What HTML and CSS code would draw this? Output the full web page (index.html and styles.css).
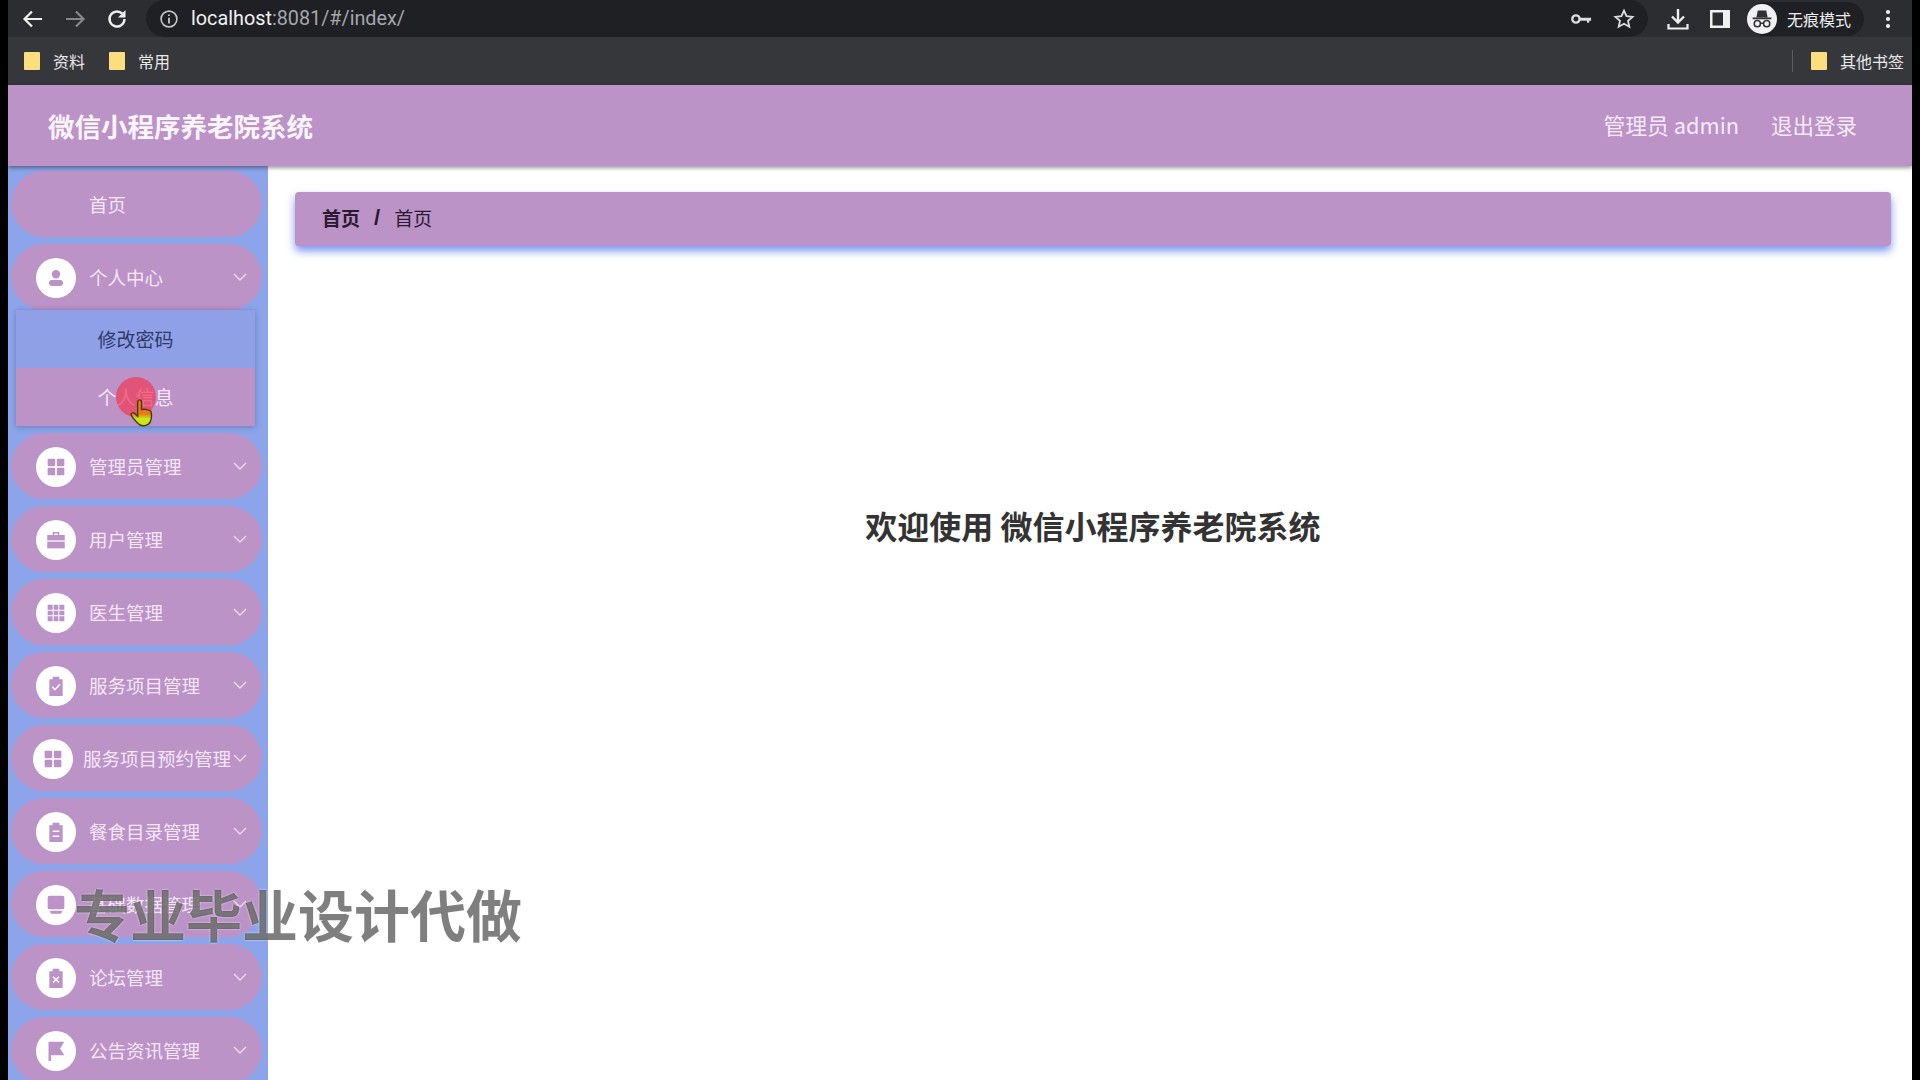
FILE: index.html
```html
<!DOCTYPE html>
<html lang="zh-CN">
<head>
    <meta charset="UTF-8">
    <title>微信小程序养老院系统</title>
    <link rel="stylesheet" href="styles.css">
</head>
<body>
    <svg class="sprite" width="0" height="0">
        <symbol id="i-user" viewBox="0 0 24 24"><circle cx="12" cy="7.500" r="5"/><rect x="3.500" y="14.500" width="17" height="7" rx="3.500"/></symbol>
        <symbol id="i-four" viewBox="0 0 24 24"><rect x="2" y="2" width="9" height="9" rx="1"/><rect x="13" y="2" width="9" height="9" rx="1"/><rect x="2" y="13" width="9" height="9" rx="1"/><rect x="13" y="13" width="9" height="9" rx="1"/></symbol>
        <symbol id="i-case" viewBox="0 0 24 24"><path d="M8 6V2.500h8V6h-1.800V4.200H9.800V6z"/><path d="M1.500 6h21v6.500h-21z"/><path d="M1.500 14h21v8h-21z"/></symbol>
        <symbol id="i-nine" viewBox="0 0 24 24"><path d="M2 2h6v6H2zM9.200 2h5.600v6H9.200zM16 2h6v6h-6zM2 9.200h6v5.600H2zM9.200 9.200h5.600v5.600H9.200zM16 9.200h6v5.600h-6zM2 16h6v6H2zM9.200 16h5.600v6H9.200zM16 16h6v6h-6z"/></symbol>
        <symbol id="i-check" viewBox="0 0 24 24"><path d="M8 1h8v3h4v20H4V4h4z"/><path d="M7.500 13l3.200 3.400 6-6.400" class="cut"/></symbol>
        <symbol id="i-list" viewBox="0 0 24 24"><path d="M8 1h8v3h4v20H4V4h4z"/><path d="M8 11h8M8 17h8" class="cut"/></symbol>
        <symbol id="i-tray" viewBox="0 0 24 24"><rect x="2" y="1" width="20" height="16" rx="2"/><path d="M5 19h14v1.500a2 2 0 0 1-2 2H7a2 2 0 0 1-2-2z"/></symbol>
        <symbol id="i-cross" viewBox="0 0 24 24"><path d="M8 1h8v3h4v20H4V4h4z"/><path d="M8.500 10.500l7 7M15.500 10.500l-7 7" class="cut"/></symbol>
        <symbol id="i-flag" viewBox="0 0 24 24"><path d="M3 1h19l-5 8 5 8H6v7H3z"/></symbol>
        <symbol id="i-chevron" viewBox="0 0 14 8"><path d="M1 1l6 6 6-6" fill="none" stroke="currentColor" stroke-width="1.400"/></symbol>
    </svg>

    <div class="screen">
        <div class="toolbar">
            <svg class="tool-icon" viewBox="0 0 24 24"><path d="M21 12H4M11 4.500L3.500 12l7.500 7.500" fill="none" stroke="#f0f0f0" stroke-width="2.200"/></svg>
            <svg class="tool-icon" viewBox="0 0 24 24"><path d="M3 12h17M13 4.500l7.500 7.500-7.500 7.500" fill="none" stroke="#85868a" stroke-width="2.200"/></svg>
            <svg class="tool-icon" viewBox="0 0 24 24"><path d="M19.500 12a7.500 7.500 0 1 1-2.200-5.300" fill="none" stroke="#f0f0f0" stroke-width="2.400"/><path d="M20.500 3v7.500H13z" fill="#f0f0f0"/></svg>
            <div class="address">
                <svg class="info-icon" viewBox="0 0 24 24"><circle cx="12" cy="12" r="9.500" fill="none" stroke="#c4c5c8" stroke-width="2"/><path d="M12 10.500v7M12 6.500v2" stroke="#c4c5c8" stroke-width="2.200"/></svg>
                <span class="url">localhost<span class="url-rest">:8081/#/index/</span></span>
                <svg class="key-icon" viewBox="0 0 24 24"><circle cx="6.500" cy="12" r="4" fill="none" stroke="#dcdcdc" stroke-width="2.600"/><path d="M10 10.500h13V14h-2v2h-2.500v-2H10z" fill="#dcdcdc"/></svg>
                <svg class="star-icon" viewBox="0 0 24 24"><path d="M12 3l2.800 6 6.500.7-4.900 4.300 1.400 6.500L12 17.200 6.200 20.500l1.400-6.500L2.700 9.700 9.200 9z" fill="none" stroke="#dcdcdc" stroke-width="2"/></svg>
            </div>
            <svg class="tool-icon tool-download" viewBox="0 0 24 24"><path d="M12 2v13M6 9.500l6 6 6-6" fill="none" stroke="#f0f0f0" stroke-width="2.400"/><path d="M2.500 17v4.500h19V17" fill="none" stroke="#f0f0f0" stroke-width="2.200"/></svg>
            <svg class="tool-icon tool-panel" viewBox="0 0 24 24"><rect x="2" y="3" width="20" height="18" fill="#f0f0f0"/><rect x="4.500" y="5.500" width="10.500" height="13" fill="#2c2d30"/></svg>
            <div class="incognito">
                <svg class="incognito-icon" viewBox="0 0 32 32"><circle cx="16" cy="16" r="16" fill="#f1f1f3"/><path d="M6 14.500h20v1.800H6zM10 14l1.500-7h9l1.500 7z" fill="#303134"/><circle cx="11" cy="21" r="3.300" fill="none" stroke="#303134" stroke-width="1.600"/><circle cx="21" cy="21" r="3.300" fill="none" stroke="#303134" stroke-width="1.600"/><path d="M14 20.500h4" stroke="#303134" stroke-width="1.600"/></svg>
                <span>无痕模式</span>
            </div>
            <svg class="tool-icon tool-more" viewBox="0 0 24 24"><circle cx="12" cy="5" r="2.100" fill="#f0f0f0"/><circle cx="12" cy="12" r="2.100" fill="#f0f0f0"/><circle cx="12" cy="19" r="2.100" fill="#f0f0f0"/></svg>
        </div>

        <div class="bookmarks">
            <span class="bookmark"><i class="folder"></i>资料</span>
            <span class="bookmark"><i class="folder"></i>常用</span>
            <span class="bookmark-sep"></span>
            <span class="bookmark"><i class="folder"></i>其他书签</span>
        </div>

        <header class="header">
            <div class="brand">微信小程序养老院系统</div>
            <div class="user-name">管理员 admin</div>
            <div class="logout">退出登录</div>
        </header>

        <div class="main">
            <nav class="sidebar">
                <div class="nav-item nav-home"><span class="nav-label">首页</span></div>

                <div class="nav-item">
                    <span class="nav-icon"><svg><use href="#i-user"/></svg></span>
                    <span class="nav-label">个人中心</span>
                    <svg class="chevron"><use href="#i-chevron"/></svg>
                </div>
                <div class="submenu">
                    <div class="submenu-item submenu-hover">修改密码</div>
                    <div class="submenu-item">个人信息</div>
                </div>

                <div class="nav-item">
                    <span class="nav-icon"><svg><use href="#i-four"/></svg></span>
                    <span class="nav-label">管理员管理</span>
                    <svg class="chevron"><use href="#i-chevron"/></svg>
                </div>
                <div class="nav-item">
                    <span class="nav-icon"><svg><use href="#i-case"/></svg></span>
                    <span class="nav-label">用户管理</span>
                    <svg class="chevron"><use href="#i-chevron"/></svg>
                </div>
                <div class="nav-item">
                    <span class="nav-icon"><svg><use href="#i-nine"/></svg></span>
                    <span class="nav-label">医生管理</span>
                    <svg class="chevron"><use href="#i-chevron"/></svg>
                </div>
                <div class="nav-item">
                    <span class="nav-icon"><svg><use href="#i-check"/></svg></span>
                    <span class="nav-label">服务项目管理</span>
                    <svg class="chevron"><use href="#i-chevron"/></svg>
                </div>
                <div class="nav-item nav-long">
                    <span class="nav-icon"><svg><use href="#i-four"/></svg></span>
                    <span class="nav-label">服务项目预约管理</span>
                    <svg class="chevron"><use href="#i-chevron"/></svg>
                </div>
                <div class="nav-item">
                    <span class="nav-icon"><svg><use href="#i-list"/></svg></span>
                    <span class="nav-label">餐食目录管理</span>
                    <svg class="chevron"><use href="#i-chevron"/></svg>
                </div>
                <div class="nav-item">
                    <span class="nav-icon"><svg><use href="#i-tray"/></svg></span>
                    <span class="nav-label">基础数据管理</span>
                    <svg class="chevron"><use href="#i-chevron"/></svg>
                </div>
                <div class="nav-item">
                    <span class="nav-icon"><svg><use href="#i-cross"/></svg></span>
                    <span class="nav-label">论坛管理</span>
                    <svg class="chevron"><use href="#i-chevron"/></svg>
                </div>
                <div class="nav-item">
                    <span class="nav-icon"><svg><use href="#i-flag"/></svg></span>
                    <span class="nav-label">公告资讯管理</span>
                    <svg class="chevron"><use href="#i-chevron"/></svg>
                </div>
            </nav>

            <div class="content">
                <div class="breadcrumb">
                    <b>首页</b>
                    <b class="crumb-sep">/</b>
                    <span>首页</span>
                </div>
                <h1 class="welcome">欢迎使用 微信小程序养老院系统</h1>
            </div>
        </div>
    </div>

    <!-- recorded mouse pointer and video watermark sit over the page -->
    <div class="click-dot"></div>
    <svg class="hand" viewBox="0 0 24 30">
        <defs>
            <linearGradient id="handFill" x1="0" y1="0" x2="0" y2="1">
                <stop offset="0.55" stop-color="#ea7a12"/>
                <stop offset="0.72" stop-color="#c9e51c"/>
            </linearGradient>
        </defs>
        <path d="M8 3c0-3 4-3 4 0v8c3-1 9 0 10 2 1 5 0 9-1 11-2 4-9 5-12 2-3-3-7-7-8-10 0-2 3-2 4-1l3 3z" fill="url(#handFill)" stroke="#3f3a12" stroke-width="1.400"/>
    </svg>
    <div class="watermark">专业毕业设计代做</div>
</body>
</html>
```

FILE: styles.css
```css
* {
    box-sizing: border-box;
}
html, body {
    height: 100%;
    margin: 0;
}
body {
    background: #000;
    font-family: "Noto Sans CJK SC", "Noto Sans", sans-serif;
    overflow: hidden;
    padding: 0 8px;
}
.sprite {
    display: block;
    height: 0;
}
.screen {
    display: flex;
    flex-direction: column;
    height: 100vh;
    background: #fff;
}

/* browser chrome */
.toolbar {
    display: flex;
    align-items: center;
    flex: none;
    height: 37px;
    padding-left: 13px;
    background: #2c2d30;
}
.tool-icon {
    flex: none;
    width: 24px;
    height: 24px;
    margin-right: 18px;
}
.address {
    display: flex;
    align-items: center;
    flex: none;
    width: 1502px;
    height: 37px;
    margin-left: -1px;
    padding: 0 0 0 13px;
    background: #1f2023;
    border-radius: 19px;
}
.info-icon {
    width: 20px;
    height: 20px;
    margin-right: 12px;
}
.url {
    flex: 1;
    font-family: Roboto, sans-serif;
    font-size: 19.800px;
    color: #f1f1f1;
}
.url-rest {
    color: #a6a7aa;
}
.key-icon {
    width: 22px;
    height: 22px;
    margin-right: 21px;
}
.star-icon {
    width: 22px;
    height: 22px;
    margin-right: 13px;
}
.tool-download {
    margin-left: 18px;
    margin-right: 18px;
}
.tool-panel {
    margin-right: 0;
}
.incognito {
    display: flex;
    align-items: center;
    flex: none;
    width: 116px;
    height: 34px;
    margin-left: 16px;
    background: #1f2023;
    border-radius: 17px;
    font-size: 16px;
    color: #ececec;
}
.incognito-icon {
    width: 30px;
    height: 30px;
    margin-left: -1px;
    margin-right: 10px;
}
.tool-more {
    margin-left: 12px;
    margin-right: 0;
}
.bookmarks {
    display: flex;
    align-items: center;
    flex: none;
    height: 48px;
    padding: 0 8px 0 16px;
    background: #36373b;
    font-size: 16px;
    color: #e8e8e8;
}
.bookmark {
    display: flex;
    align-items: center;
    margin-right: 24px;
}
.bookmark:last-child {
    margin-right: 0;
}
.folder {
    display: block;
    width: 16px;
    height: 18px;
    margin-right: 13px;
    background: #fbdf7f;
    border-radius: 1px;
}
.bookmark-sep {
    width: 1px;
    height: 22px;
    margin-left: auto;
    margin-right: 18px;
    background: #5b5c60;
}

/* app header */
.header {
    position: relative;
    z-index: 2;
    display: flex;
    align-items: center;
    flex: none;
    height: 81px;
    padding: 0 55px 0 40px;
    background: #bb93c6;
    box-shadow: 0 2px 4px rgba(0, 0, 0, 0.4);
    color: #f8e9fa;
}
.brand {
    margin-right: auto;
    font-size: 26.500px;
    font-weight: 700;
    color: #fbf4fc;
}
.user-name {
    margin-right: 32px;
    padding-bottom: 3px;
    font-size: 21.800px;
}
.logout {
    padding-bottom: 2px;
    font-size: 21.500px;
}

.main {
    display: flex;
    flex: 1;
    min-height: 0;
}
.sidebar {
    flex: none;
    width: 260px;
    padding: 5px 6px 0 3px;
    background: #8ca5ea;
    overflow: hidden;
}
.nav-item {
    display: flex;
    align-items: center;
    height: 66px;
    margin-bottom: 7px;
    padding: 0 15px 0 25px;
    background: #bb93c6;
    border-radius: 33px;
    font-size: 18.500px;
    color: #f6e6f8;
    white-space: nowrap;
}
.nav-home {
    padding-left: 78px;
}
.nav-icon {
    display: flex;
    align-items: center;
    justify-content: center;
    flex: none;
    width: 40px;
    height: 40px;
    margin-top: 1px;
    margin-right: 13px;
    background: #fff;
    border-radius: 50%;
}
.nav-icon svg {
    width: 20px;
    height: 20px;
    fill: #bb93c6;
}
.cut {
    fill: none;
    stroke: #fff;
    stroke-width: 1.800;
}
.nav-label {
    flex: 1;
    padding-bottom: 1px;
}
.chevron {
    flex: none;
    width: 14px;
    height: 8px;
    color: #f0d8f3;
}
.nav-long {
    padding-left: 22px;
}
.nav-long .nav-icon {
    margin-right: 10px;
}
.submenu {
    margin: -7px 7px 7px 5px;
    box-shadow: 0 1px 6px rgba(60, 60, 110, 0.4);
}
.submenu-item {
    height: 58px;
    background: #bb93c6;
    font-size: 19px;
    line-height: 58px;
    text-align: center;
    color: #f6e6f8;
}
.submenu-hover {
    background: #8fa0e6;
    color: #2f3a6c;
}

/* page content */
.content {
    flex: 1;
    min-width: 0;
    padding: 26px 21px 0 27px;
}
.breadcrumb {
    display: flex;
    align-items: center;
    height: 54px;
    padding: 0 0 4px 27px;
    background: #bb93c6;
    border-radius: 4px;
    box-shadow: 0 5px 8px rgba(100, 130, 235, 0.85);
    font-size: 19px;
    color: #2b1a30;
}
.crumb-sep {
    margin: 0 14px;
    padding-top: 1px;
    font-family: "Liberation Sans", sans-serif;
    font-size: 22px;
    line-height: 1;
}
.welcome {
    margin: 259px 0 0;
    font-size: 32px;
    font-weight: 700;
    line-height: 40px;
    text-align: center;
    color: #333;
}

/* overlays */
.click-dot {
    position: absolute;
    left: 116px;
    top: 377px;
    width: 40px;
    height: 40px;
    background: rgba(240, 60, 90, 0.72);
    border-radius: 50%;
}
.hand {
    position: absolute;
    left: 130px;
    top: 399px;
    width: 23px;
    height: 29px;
}
.watermark {
    position: absolute;
    left: 74px;
    top: 873px;
    font-size: 56px;
    font-weight: 700;
    line-height: 80px;
    white-space: nowrap;
    color: rgba(0, 0, 0, 0.5);
    text-shadow: 0 0 2px rgba(255, 255, 255, 0.8);
}
```
